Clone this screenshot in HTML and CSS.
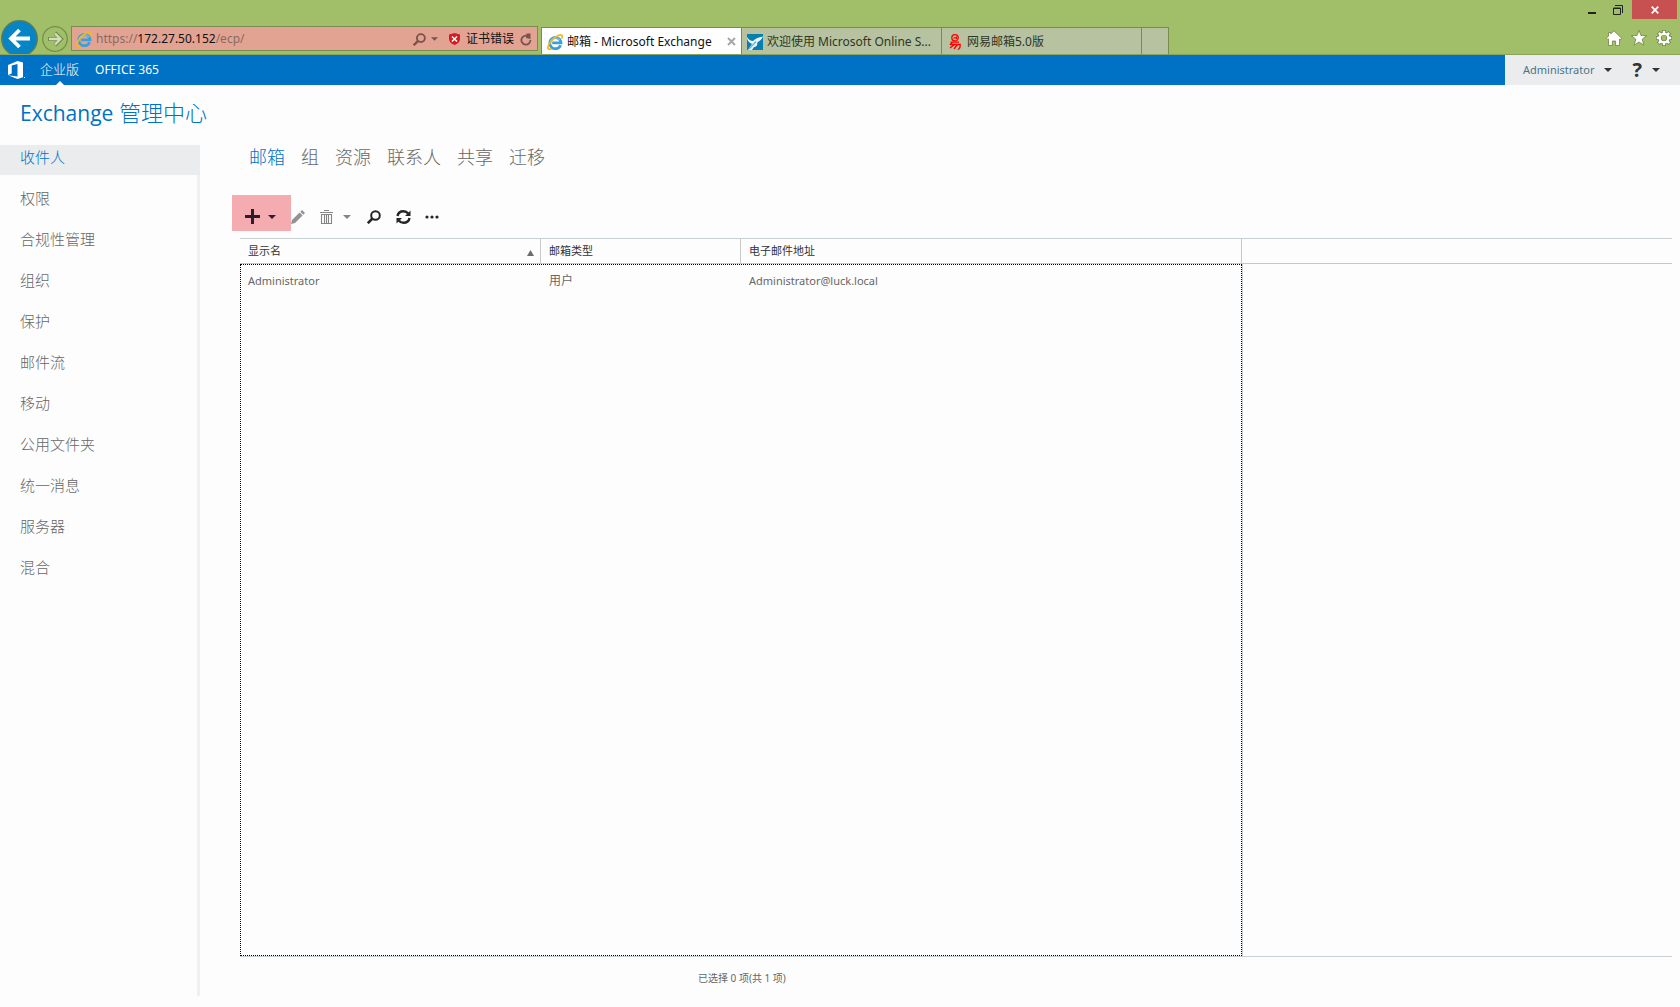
FILE: index.html
```html
<!DOCTYPE html>
<html lang="zh-CN">
<head>
<meta charset="utf-8">
<title>邮箱 - Microsoft Exchange</title>
<link rel="stylesheet" href="styles.css">
</head>
<body>
<svg class="defs" aria-hidden="true">
  <symbol id="ie" viewBox="0 0 16 16">
    <path d="M13.600 11.200A5.600 5.600 0 1 1 14 8.900H5.200" fill="none" stroke="#3d9fd9" stroke-width="2.800"/>
    <path d="M3 9.400A5.600 5.600 0 0 1 13 6" fill="none" stroke="#8fd0f2" stroke-width="1"/>
    <path d="M4.400 14.900C.8 16.200.2 13.900 1.700 10.800 4 6 9.400 1.500 13 .9c2.600-.3 2.600 1.800 1.600 3.800" fill="none" stroke="#f3b81f" stroke-width="1.700"/>
  </symbol>
  <symbol id="caret" viewBox="0 0 8 4"><path d="M0 0h8L4 4z" fill="currentColor"/></symbol>
  <symbol id="search" viewBox="0 0 14 14"><circle cx="8.500" cy="5.500" r="4.300" fill="none" stroke="currentColor" stroke-width="2"/><path d="M5.500 8.500.8 13.200" stroke="currentColor" stroke-width="2.500"/></symbol>
</svg>

<header class="browser">
  <button class="back" aria-label="后退"><svg width="37" height="37" viewBox="0 0 37 37"><circle cx="18.500" cy="18.500" r="17.800" fill="#0684c6" stroke="#5c7c55" stroke-width="1.400"/><path d="M29 18.500H10M18.500 10 10 18.500l8.500 8.500" fill="none" stroke="#fff" stroke-width="3.800"/></svg></button>
  <button class="forward" aria-label="前进"><svg width="26" height="26" viewBox="0 0 26 26"><circle cx="13" cy="13" r="12.300" fill="none" stroke="#778f4e" stroke-width="1.300"/><path d="M6 13h12M13 7l6 6-6 6" fill="none" stroke="#758c4f" stroke-width="4"/><path d="M7 13h11M13 7.500l5.500 5.500-5.500 5.500" fill="none" stroke="#d4dfb9" stroke-width="2.300"/></svg></button>
  <div class="address">
    <svg width="16" height="16"><use href="#ie"/></svg>
    <div class="url" role="textbox" aria-label="地址">https://<b>172.27.50.152</b>/ecp/</div>
    <button class="addr-search" aria-label="搜索"><svg width="13" height="13"><use href="#search"/></svg></button>
    <button class="addr-caret" aria-label="显示地址列表"><svg width="7" height="4"><use href="#caret"/></svg></button>
    <button class="cert"><svg width="11" height="12" viewBox="0 0 11 12"><path d="M5.500 0 11 1.500V6c0 3-2.500 5-5.500 6C2.500 11 0 9 0 6V1.500z" fill="#d51c24"/><path d="m3 3.500 5 5m0-5-5 5" stroke="#fff" stroke-width="1.600"/></svg>证书错误</button>
    <button class="reload" aria-label="刷新"><svg width="12" height="13" viewBox="0 0 12 13"><path d="M10.400 7A4.500 4.500 0 1 1 8 3.200" fill="none" stroke="currentColor" stroke-width="1.800"/><path d="M6.500.5 10.500.5V6L6 5z" fill="currentColor"/></svg></button>
  </div>
  <nav class="window-tabs" aria-label="浏览器标签页">
    <div class="wtab current"><svg width="16" height="16"><use href="#ie"/></svg><a href="#">邮箱 - Microsoft Exchange</a><button class="close-tab" aria-label="关闭标签页"><svg width="9" height="9" viewBox="0 0 9 9"><path d="m1 1 7 7m0-7-7 7" stroke="#a8a8a8" stroke-width="2"/></svg></button></div>
    <div class="wtab"><svg width="16" height="16" viewBox="0 0 16 16"><path fill="#087fae" d="M0 0h16v16H0z"/><path d="M0 3c2 3 4 4 6 4 2-2 5-4 10-4.500-1 3-4 4.500-6 6.500 1 2-1 4-3 4l-2 3H1l4-6C3 9 0 7 0 3z" fill="#e9f5fb"/><path d="m2 15 7-7.500" stroke="#6fb4d3" stroke-width="1.300"/></svg><a href="#">欢迎使用 Microsoft Online S...</a></div>
    <div class="wtab"><svg width="16" height="16" viewBox="0 0 16 16" fill="none" stroke="#f00" stroke-width="1.300"><circle cx="8" cy="3.800" r="3.200"/><path d="M6.500 3.800h3M9.500 2.500v2.500M3.500 8.200H12M5.500 8 3 11M4 10.500h9.200c0 3-.5 4.800-2.500 4.800M7.500 10.500 3 14M10.500 10.500 7 15"/></svg><a href="#">网易邮箱5.0版</a></div>
    <button class="new-tab" aria-label="新建标签页"></button>
  </nav>
  <div class="window-side">
    <div class="window-buttons">
      <button aria-label="最小化"><svg width="8" height="10" viewBox="0 0 8 10"><path d="M0 7h8v2H0z" fill="#222"/></svg></button>
      <button aria-label="还原"><svg width="10" height="10" viewBox="0 0 10 10" fill="none" stroke="#222"><path d="M2 .5h7.500V8M.5 3h7v6.500h-7zM.5 3.500h7"/></svg></button>
      <button class="close" aria-label="关闭"><svg width="8" height="8" viewBox="0 0 8 8"><path d="m.7.700 6.600 6.600m0-6.600L.7 7.300" stroke="#fff" stroke-width="1.700"/></svg></button>
    </div>
    <div class="window-tools">
      <button aria-label="主页"><svg width="16" height="16" viewBox="0 0 16 16"><path d="m8 .8 7.600 7.400-1.300 1.500-.8-.8v6.600H9.600v-4.500H6.400v4.500H2.500V8.900l-.8.800L.4 8.200l2.100-2V2.500h2.300v1.400z" fill="#fff" stroke="#6d8145" stroke-width=".8"/></svg></button>
      <button aria-label="收藏夹"><svg width="16" height="16" viewBox="0 0 16 16"><path d="m8 .3 2 5.300h5.700l-4.500 3.600 1.700 6L8 12l-4.900 3.200 1.700-6L.3 5.600H6z" fill="#fff" stroke="#6d8145" stroke-width=".8"/></svg></button>
      <button aria-label="工具"><svg width="16" height="16" viewBox="0 0 16 16" fill="none"><g stroke="#6d8145" stroke-width="4"><path d="M8 0v4M8 12v4M0 8h4M12 8h4M2.300 2.300l3 3M10.700 10.700l3 3M2.300 13.700l3-3M10.700 5.300l3-3"/></g><circle cx="8" cy="8" r="4.300" stroke="#6d8145" stroke-width="3.800"/><g stroke="#fff" stroke-width="2.400"><path d="M8 .7V4M8 12v3.300M.7 8H4M12 8h3.300M2.800 2.800 5 5M11 11l2.200 2.200M2.800 13.200 5 11M11 5l2.200-2.200"/></g><circle cx="8" cy="8" r="4.300" stroke="#fff" stroke-width="2.400"/></svg></button>
    </div>
  </div>
</header>

<div class="suite">
  <a class="office" href="#" aria-label="Office"><svg width="17" height="18" viewBox="0 0 17 18"><path d="M0 4 9.500 0 15 1.600v14.600L9.500 18 0 14.300l9.500 1.200V3L3.700 4.400v8.200L0 14z" fill="#fff"/><path d="M16 16.500h1" stroke="#fff"/></svg></a>
  <a class="suite-link selected" href="#">企业版</a>
  <a class="suite-link" href="#">OFFICE 365</a>
  <div class="account">
    <button class="user">Administrator<svg width="8" height="4"><use href="#caret"/></svg></button>
    <button class="help" aria-label="帮助"><span>?</span><svg width="8" height="4"><use href="#caret"/></svg></button>
  </div>
</div>

<h1 class="title"><span class="title-latin">Exchange</span> 管理中心</h1>

<div class="columns">
  <nav class="sidebar" aria-label="功能">
    <a class="active" href="#">收件人</a>
    <a href="#">权限</a>
    <a href="#">合规性管理</a>
    <a href="#">组织</a>
    <a href="#">保护</a>
    <a href="#">邮件流</a>
    <a href="#">移动</a>
    <a href="#">公用文件夹</a>
    <a href="#">统一消息</a>
    <a href="#">服务器</a>
    <a href="#">混合</a>
  </nav>
  <main class="content">
    <nav class="tabs" aria-label="收件人">
      <a class="active" href="#">邮箱</a><a href="#">组</a><a href="#">资源</a><a href="#">联系人</a><a href="#">共享</a><a href="#">迁移</a>
    </nav>
    <div class="toolbar">
      <button class="add" aria-label="新建"><svg width="15" height="15" viewBox="0 0 15 15"><path d="M6 0h3v6h6v3H9v6H6V9H0V6h6z" fill="currentColor"/></svg><svg width="8" height="4"><use href="#caret"/></svg></button>
      <button class="edit" aria-label="编辑" disabled><svg width="14" height="14" viewBox="0 0 14 14" fill="currentColor"><path d="m0 14 1-4 7.600-7.600 3 3L4 13zM9.300 1.700 11 0l3 3-1.700 1.700z"/></svg></button>
      <button class="delete" aria-label="删除" disabled><svg width="13" height="14" viewBox="0 0 13 14" fill="none" stroke="currentColor"><path d="M0 2.500h13M4 .5h5M1.500 4.500h10v9h-10zM4.500 5v8M6.500 5v8M8.500 5v8" stroke-width="1.100"/></svg><svg width="8" height="4"><use href="#caret"/></svg></button>
      <button class="find" aria-label="搜索"><svg width="14" height="14"><use href="#search"/></svg></button>
      <button class="refresh" aria-label="刷新"><svg width="15" height="14" viewBox="0 0 15 14"><path d="M1.500 6C2 3 4.500 1.200 7.500 1.200c2 0 3.500.8 4.700 2.300M13.500 8c-.5 3-3 4.800-6 4.800-2 0-3.500-.8-4.700-2.300" fill="none" stroke="currentColor" stroke-width="2.400"/><path d="M14.500.5V6H9zM.5 13.500V8H6z" fill="currentColor"/></svg></button>
      <button class="more" aria-label="更多"><svg width="14" height="4" viewBox="0 0 14 4" fill="currentColor"><circle cx="2" cy="2" r="1.600"/><circle cx="7" cy="2" r="1.600"/><circle cx="12" cy="2" r="1.600"/></svg></button>
    </div>
    <div class="grid">
      <table>
        <colgroup><col class="c-name"><col class="c-type"><col class="c-mail"><col></colgroup>
        <thead><tr><th><div class="sorted">显示名<svg width="7" height="6" viewBox="0 0 7 6"><path d="M3.500 0 7 6H0z" fill="#6f6b6e"/></svg></div></th><th>邮箱类型</th><th>电子邮件地址</th><th></th></tr></thead>
        <tbody><tr><td class="small-latin">Administrator</td><td>用户</td><td class="small-latin">Administrator@luck.local</td><td></td></tr></tbody>
      </table>
      <div class="focus-box"></div>
    </div>
    <p class="status">已选择 0 项(共 1 项)</p>
  </main>
</div>
</body>
</html>
```
FILE: styles.css
```css
* { box-sizing: border-box; }
body {
  margin: 0;
  min-height: 100vh;
  display: flex;
  flex-direction: column;
  background: #fdfdfd;
  color: #666;
  font: 12px/16px "Noto Sans", "Noto Sans CJK SC", sans-serif;
}
svg { display: block; flex: none; }
.defs { position: absolute; width: 0; height: 0; }
a { color: inherit; text-decoration: none; }
button { margin: 0; padding: 0; border: 0; background: none; color: inherit; font: inherit; display: flex; align-items: center; }

/* Browser window */
.browser {
  display: flex;
  align-items: flex-end;
  height: 55px;
  background: #a1bf69;
  border-bottom: 1px solid #8ca45a;
}
.back { align-self: flex-start; height: 34px; margin: 20px 0 0 1px; overflow: hidden; align-items: flex-start; }
.forward { margin: 0 3px 2px 4px; }
.address {
  display: flex;
  align-items: center;
  width: 467px;
  height: 25px;
  margin-bottom: 3px;
  padding: 1px 5px 0 4px;
  border: 1px solid #798b50;
  background: #e3a393;
  color: #7a534c;
}
.url { flex: 1; margin-left: 4px; color: #8a6a60; }
.url b { font-weight: 400; color: #111; }
.addr-caret { margin: 0 11px 0 5px; }
.cert { gap: 6px; margin-right: 6px; color: #111; }
.window-tabs { display: flex; height: 27px; margin-left: 3px; border: solid #798b50; border-width: 1px 1px 0; }
.wtab { display: flex; align-items: center; gap: 4px; width: 200px; padding: 1px 5px 0; background: #b6c2a0; color: #2e3625; border-right: 1px solid #798b50; white-space: nowrap; }
.wtab.current { background: #fff; color: #111; }
.close-tab { margin-left: auto; }
.new-tab { width: 26px; background: #b6c2a0; }
.window-side { display: flex; flex-direction: column; align-self: stretch; margin-left: auto; }
.window-buttons { display: flex; align-items: center; justify-content: flex-end; gap: 17px; height: 19px; padding-right: 3px; }
.window-buttons .close { align-self: stretch; justify-content: center; width: 45px; margin-left: -8px; background: #c75050; }
.window-tools { display: flex; justify-content: flex-end; gap: 9px; padding: 11px 8px 0 0; }

/* Suite bar */
.suite { display: flex; align-items: stretch; height: 30px; background: #0072c6; color: #fff; }
.office { display: flex; align-items: center; margin: 0 15px 0 8px; }
.suite-link { display: flex; align-items: center; margin-right: 16px; }
.suite-link.selected { position: relative; padding-bottom: 3px; font-size: 13px; font-weight: 300; }
.suite-link.selected::after { content: ""; position: absolute; bottom: 0; left: calc(50% - 4px); border: 4px solid transparent; border-top: 0; border-bottom-color: #fff; }
.account { display: flex; gap: 20px; margin-left: auto; width: 175px; padding-left: 18px; background: #eaecee; color: #333; }
.user { color: #4c7389; font-size: 11px; gap: 10px; }
.user svg, .help svg { color: #333; }
.help { gap: 10px; }
.help span { font: bold 20px/20px "Open Sans", sans-serif; }

.title { margin: 0; padding: 13px 20px 0; height: 60px; color: #0072c6; font-size: 22px; line-height: 28px; font-weight: 300; }
.title-latin { font-family: "Open Sans", sans-serif; font-size: 21px; font-weight: 400; }

/* Page columns */
.columns { flex: 1; display: flex; margin-bottom: 11px; }
.sidebar { width: 200px; flex: none; display: flex; flex-direction: column; gap: 11px; border-right: 3px solid #f0f0f1; font-size: 15px; line-height: 25px; font-weight: 300; }
.sidebar a { height: 30px; padding-left: 20px; }
.sidebar .active { margin-right: -3px; background: #eaecee; color: #0072c6; }
.content { flex: 1; display: flex; flex-direction: column; min-width: 0; padding: 0 8px 0 40px; }
.tabs { display: flex; gap: 16px; padding: 0 9px; height: 50px; font-size: 18px; line-height: 25px; font-weight: 300; }
.tabs .active { color: #0072c6; }
.toolbar { display: flex; align-items: center; height: 36px; margin-left: -8px; color: #262626; }
.toolbar button { height: 36px; padding-top: 8px; }
.toolbar .add { gap: 8px; width: 59px; padding: 7px 0 0 13px; background: #f4acb0; color: #2b1f2f; }
.toolbar .edit { color: #929292; }
.toolbar .delete { gap: 10px; margin-left: 15px; color: #858585; }
.toolbar .find { margin-left: 16px; }
.toolbar .refresh { margin-left: 15px; }
.toolbar .more { margin-left: 14px; }

/* Mailbox list */
.grid { position: relative; flex: 1; margin-top: 7px; border: solid #c8d0d4; border-width: 1px 0; }
table { width: 100%; table-layout: fixed; border-collapse: separate; border-spacing: 0; }
.c-name { width: 301px; }
.c-type { width: 200px; }
.c-mail { width: 501px; }
th { height: 25px; padding: 0 8px; font-size: 11px; line-height: 24px; font-weight: 400; text-align: left; color: #333; border: solid #c8c8c8; border-width: 0 1px 1px 0; }
th:last-child { border-right: 0; }
.sorted { display: flex; justify-content: space-between; align-items: center; margin-right: -2px; }
.sorted svg { margin-top: 4px; }
td { height: 34px; padding: 0 8px; }
.small-latin { font-size: 11px; }
.focus-box { position: absolute; top: 25px; bottom: 0; left: 0; width: 1003px; border-right: 1px solid #c8d0d4; }
.focus-box::before { content: ""; position: absolute; inset: 0; border: 1px dotted #000; }
.status { margin: 14px 0 11px 458px; font-size: 10px; line-height: 14px; }
```
